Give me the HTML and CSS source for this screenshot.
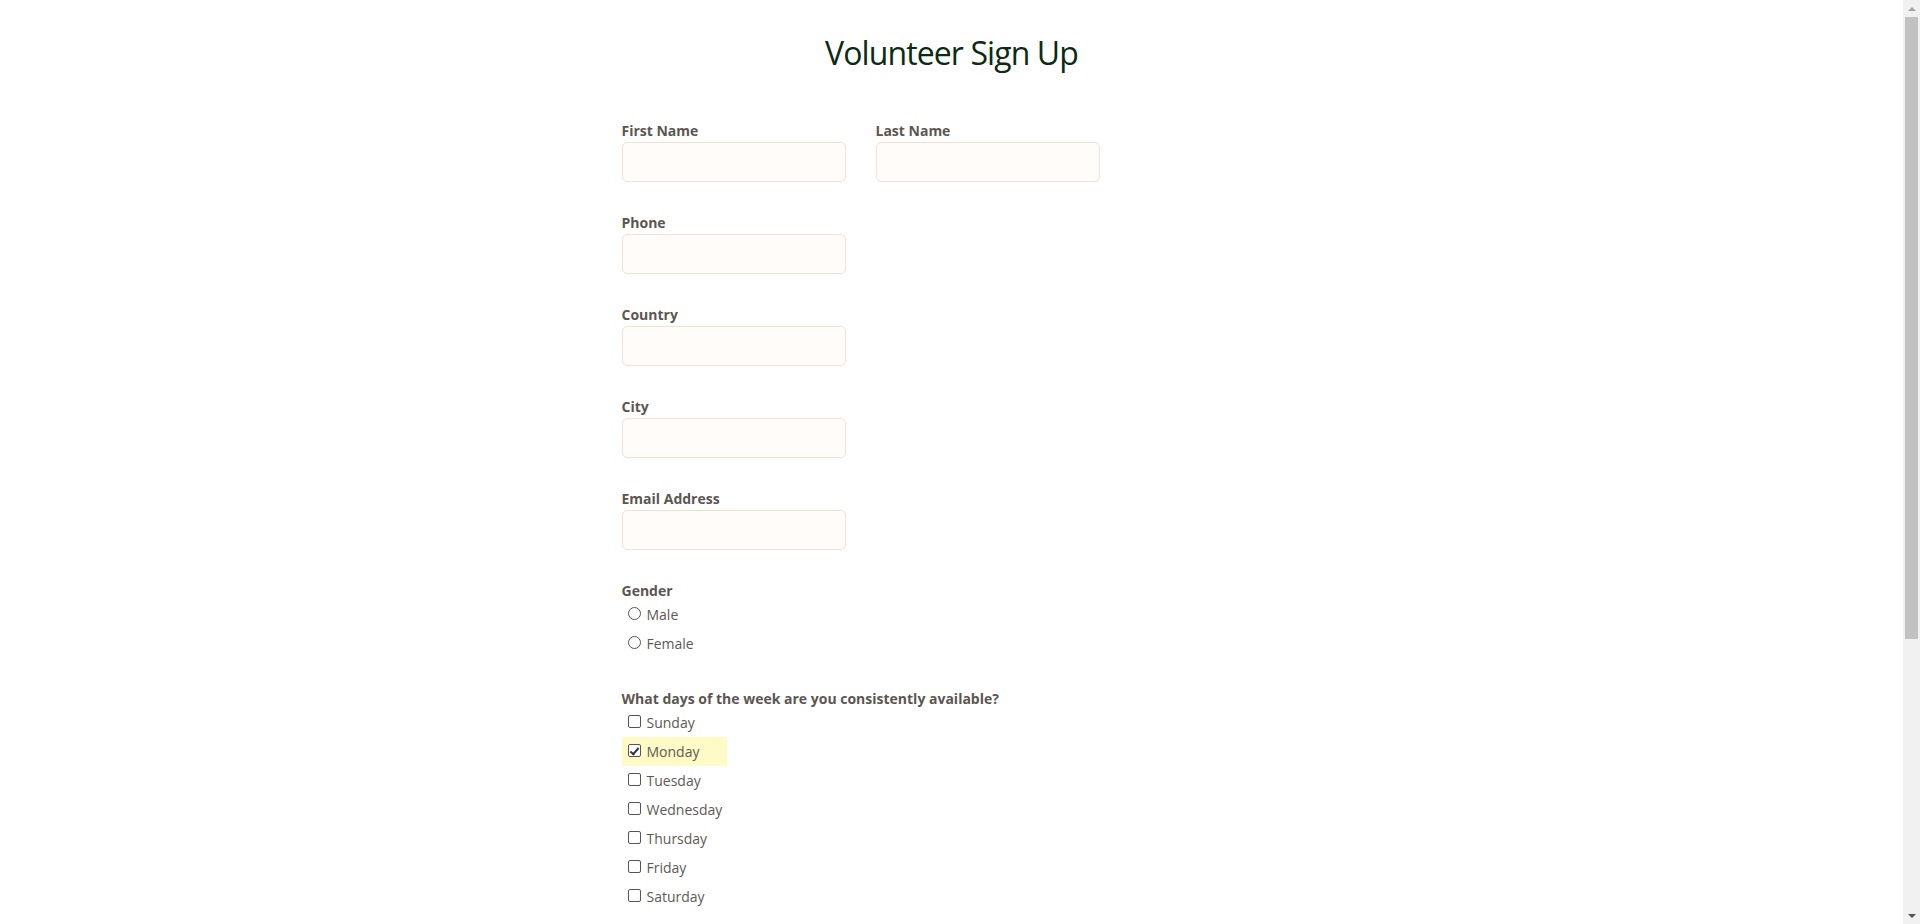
FILE: index.html
```html
<!DOCTYPE html>
<html lang="en">
<head>
<meta charset="utf-8">
<title>Volunteer Sign Up</title>
<link rel="stylesheet" href="styles.css">
</head>
<body>
<main class="page">
  <h1 class="title">Volunteer Sign Up</h1>
  <form class="form">
    <div class="row">
      <div class="field">
        <label class="label" for="first">First Name</label>
        <input class="input" id="first" type="text">
      </div>
      <div class="field">
        <label class="label" for="last">Last Name</label>
        <input class="input" id="last" type="text">
      </div>
    </div>
    <div class="field">
      <label class="label" for="phone">Phone</label>
      <input class="input" id="phone" type="text">
    </div>
    <div class="field">
      <label class="label" for="country">Country</label>
      <input class="input" id="country" type="text">
    </div>
    <div class="field">
      <label class="label" for="city">City</label>
      <input class="input" id="city" type="text">
    </div>
    <div class="field">
      <label class="label" for="email">Email Address</label>
      <input class="input" id="email" type="text">
    </div>
    <div class="group">
      <div class="label label-group">Gender</div>
      <label class="option"><input class="radio" type="radio" name="gender"><span>Male</span></label>
      <label class="option"><input class="radio" type="radio" name="gender"><span>Female</span></label>
    </div>
    <div class="group">
      <div class="label label-group">What days of the week are you consistently available?</div>
      <label class="option"><input class="check" type="checkbox"><span>Sunday</span></label>
      <label class="option option-on"><input class="check" type="checkbox" checked><span>Monday</span></label>
      <label class="option"><input class="check" type="checkbox"><span>Tuesday</span></label>
      <label class="option"><input class="check" type="checkbox"><span>Wednesday</span></label>
      <label class="option"><input class="check" type="checkbox"><span>Thursday</span></label>
      <label class="option"><input class="check" type="checkbox"><span>Friday</span></label>
      <label class="option"><input class="check" type="checkbox"><span>Saturday</span></label>
    </div>
  </form>
</main>
<div class="scrollbar" aria-hidden="true">
  <div class="sb-button"><span class="sb-arrow sb-up"></span></div>
  <div class="sb-track">
    <div class="sb-thumb"></div>
  </div>
  <div class="sb-button"><span class="sb-arrow sb-down"></span></div>
</div>
</body>
</html>
```

FILE: styles.css
```css
html, body {
  margin: 0;
  padding: 0;
  background: #ffffff;
}

body {
  font-family: "Open Sans", "Noto Sans", sans-serif;
  color: #5c5652;
  padding-right: 17px;
}

.page {
  padding: 28px 0 430px;
}

.title {
  margin: 0;
  text-align: center;
  font-size: 32px;
  letter-spacing: -0.9px;
  line-height: 49px;
  font-weight: 400;
  color: #0d2b12;
}

.form {
  width: 660px;
  margin: 45px auto 0;
  display: flex;
  flex-direction: column;
  gap: 32px;
}

.row {
  display: flex;
  gap: 30px;
}

.field {
  display: flex;
  flex-direction: column;
  align-items: flex-start;
}

.label {
  display: block;
  font-size: 14px;
  line-height: 18px;
  font-weight: 700;
  color: #5c5652;
}

.field .label {
  margin-bottom: 2px;
}

.input {
  box-sizing: border-box;
  width: 224px;
  height: 40px;
  margin: 0;
  padding: 0 10px;
  border: 1px solid #f5e1d3;
  border-radius: 5px;
  background: #fffcfa;
  font: inherit;
  outline: none;
}

.group {
  display: flex;
  flex-direction: column;
  align-items: flex-start;
}

.option {
  display: inline-flex;
  align-items: center;
  height: 29px;
  padding: 0 28px 0 6px;
  font-size: 14px;
  line-height: 19px;
  color: #5f5955;
  cursor: pointer;
}

.option-on {
  background: #fffac6;
}

.radio,
.check {
  appearance: none;
  -webkit-appearance: none;
  box-sizing: border-box;
  width: 13px;
  height: 13px;
  margin: -2px 6px 0 0;
  border: 1px solid #555555;
  background: #ffffff;
  position: relative;
  flex: none;
}

.radio {
  border-radius: 50%;
}

.check {
  border-radius: 2px;
}

.check:checked::after {
  content: "";
  position: absolute;
  left: 3.5px;
  top: 0.5px;
  width: 3px;
  height: 7px;
  border-right: 2px solid #333333;
  border-bottom: 2px solid #333333;
  transform: rotate(40deg);
}

/* window scrollbar, drawn over the right edge */
.scrollbar {
  position: fixed;
  top: 0;
  right: 0;
  width: 17px;
  height: 100vh;
  background: #f1f1f1;
  display: flex;
  flex-direction: column;
}

.sb-button {
  height: 17px;
  flex: none;
  display: flex;
  align-items: center;
  justify-content: center;
}

.sb-track {
  flex: 1;
  display: flex;
  flex-direction: column;
}

.sb-thumb {
  height: 622px;
  margin: 0 2px;
  background: #c1c1c1;
}

.sb-arrow {
  width: 0;
  height: 0;
  border-left: 4px solid transparent;
  border-right: 4px solid transparent;
}

.sb-up {
  border-bottom: 4px solid #a3a3a3;
}

.sb-down {
  border-top: 4px solid #505050;
}
```
